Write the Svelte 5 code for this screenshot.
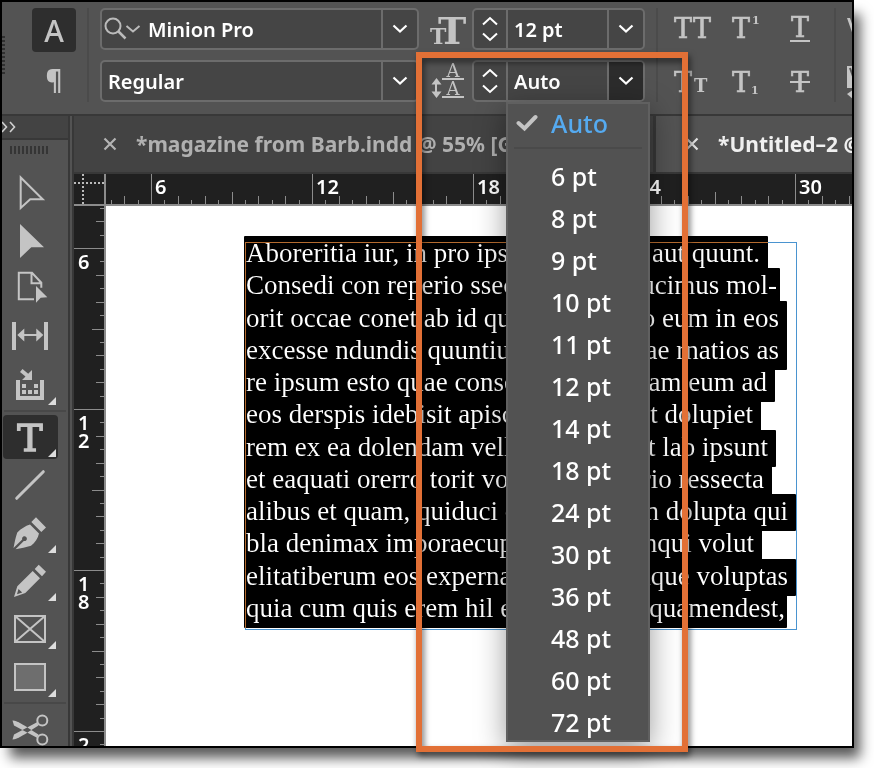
<script>
  const sizes = [6, 8, 9, 10, 11, 12, 14, 18, 24, 30, 36, 48, 60, 72];

  // Selected story text: the part before and after the open menu, plus the width of its highlight.
  const story = [
    { left: 'Aboreritia iur, in pro ips', right: 'aut quunt.', width: 524, end: 8 },
    { left: 'Consedi con reperio ssec', right: 'ucimus mol-', width: 536, end: 3 },
    { left: 'orit occae conet ab id qu', right: 'o eum in eos', width: 543, end: 8 },
    { left: 'excesse ndundis quuntiu', right: 'ae rnatios as', width: 543, end: 8 },
    { left: 're ipsum esto quae conse', right: 'am eum ad', width: 531, end: 8 },
    { left: 'eos derspis idebisit apisc', right: 't dolupiet', width: 517, end: 8 },
    { left: 'rem ex ea dolendam vell', right: 't lab ipsunt', width: 532, end: 8 },
    { left: 'et eaquati orerro torit vo', right: 'rio ressecta', width: 528, end: 8 },
    { left: 'alibus et quam, quiduci c', right: 'n dolupta qui', width: 552, end: 8 },
    { left: 'bla denimax imporaecup', right: 'nqui volut', width: 518, end: 8 },
    { left: 'elitatiberum eos experna', right: 'aque voluptas', width: 552, end: 8 },
    { left: 'quia cum quis erem hil e', right: 'quamendest,', width: 543, end: 2 }
  ];

  const step = 161 / 12;
  function makeTicks(origin, limit) {
    const ticks = [];
    for (let i = -6; origin + i * step < limit; i++) {
      const k = ((i % 12) + 12) % 12;
      ticks.push({ at: Math.round(origin + i * step) + 0.5, len: k === 0 ? 30 : k === 6 ? 12 : k % 2 === 0 ? 8 : 4 });
    }
    return ticks.filter((t) => t.at > 0);
  }
  const across = makeTicks(45, 2400);
  const down = makeTicks(42, 1600);
  const acrossLabels = [6, 12, 18, 24, 30].map((n, i) => ({ n, at: 49 + i * 161 }));
  const downLabels = ['6', '12', '18', '24'].map((n, i) => ({ n: n.split(''), at: 63 + i * 161 }));

  let leading = $state('Auto');
</script>

{#snippet chevron()}
  <svg width="16" height="10" viewBox="0 0 16 10"><path d="M1.5 1.5 8 7.5l6.5-6" fill="none" stroke="#fff" stroke-width="2.2" /></svg>
{/snippet}

{#snippet spinner(what)}
  <span class="spin">
    <button aria-label="Increase {what}"><svg width="16" height="10" viewBox="0 0 16 10"><path d="M1 8.5 8 2l7 6.500" fill="none" stroke="#fff" stroke-width="2" /></svg></button>
    <button aria-label="Decrease {what}"><svg width="16" height="10" viewBox="0 0 16 10"><path d="M1 1.500 8 8l7-6.500" fill="none" stroke="#fff" stroke-width="2" /></svg></button>
  </span>
{/snippet}

{#snippet corner()}
  <path d="M54 36v8h-8z" fill="#ddd" />
{/snippet}

<div class="window">
  <header class="toolbar">
    <div class="grip"></div>
    <div class="modes">
      <button class="mode on" aria-label="Character formatting">A</button>
      <button class="mode para" aria-label="Paragraph formatting">¶</button>
    </div>
    <div class="rule"></div>
    <div class="fields fonts">
      <div class="combo">
        <svg class="search" width="40" height="38" viewBox="0 0 40 38">
          <circle cx="11" cy="16" r="7.500" fill="none" stroke="#bbb" stroke-width="2" />
          <path d="m16.500 21.500 7 7" stroke="#bbb" stroke-width="2.500" />
          <path d="m24.500 16 6.500 5.500 6.500-5.500" fill="none" stroke="#bbb" stroke-width="2" />
        </svg>
        <input aria-label="Font family" value="Minion Pro" />
        <button class="drop" aria-label="Font family list">{@render chevron()}</button>
      </div>
      <div class="combo">
        <input aria-label="Font style" value="Regular" />
        <button class="drop" aria-label="Font style list">{@render chevron()}</button>
      </div>
    </div>
    <div class="fields metrics">
      <div class="metric">
        <svg width="38" height="42" viewBox="0 0 38 42">
          <g fill="#c4c4c4" font-family="DejaVu Serif, serif" font-weight="700">
            <text x="8" y="36" font-size="38">T</text>
            <text x="0" y="36" font-size="22" stroke="#535353" stroke-width="2" paint-order="stroke">T</text>
          </g>
        </svg>
        <div class="combo">
          {@render spinner('font size')}
          <input aria-label="Font size" value="12 pt" />
          <button class="drop" aria-label="Font size list">{@render chevron()}</button>
        </div>
      </div>
      <div class="metric">
        <svg width="38" height="42" viewBox="0 0 38 42">
          <g fill="#c4c4c4" font-weight="400">
            <path d="M6 22v12" stroke="#c4c4c4" stroke-width="2" />
            <path d="m6.500 18 5 6.500h-10zM6.500 38l5-6.500h-10z" />
            <path d="M12 18h22v2H12zM12 36h22v2H12z" />
            <text x="23" y="17" font-size="18" text-anchor="middle" font-family="DejaVu Serif, serif">A</text>
            <text x="23" y="35" font-size="18" text-anchor="middle" font-family="DejaVu Serif, serif">A</text>
          </g>
        </svg>
        <div class="combo">
          {@render spinner('leading')}
          <input aria-label="Leading" bind:value={leading} />
          <button class="drop open" aria-label="Leading list" aria-expanded="true">{@render chevron()}</button>
          <div class="menu" role="listbox" aria-label="Leading values">
            <button class="auto" role="option" aria-selected="true" onclick={() => (leading = 'Auto')}>
              <svg width="22" height="18" viewBox="0 0 22 18"><path d="m2.500 9 6 5.500L19.500 3" fill="none" stroke="#c4c4c4" stroke-width="4" stroke-linecap="round" /></svg>
              Auto
            </button>
            <hr />
            {#each sizes as size}
              <button role="option" aria-selected="false" onclick={() => (leading = `${size} pt`)}>{size} pt</button>
            {/each}
          </div>
        </div>
        <div class="callout"></div>
      </div>
    </div>
    <div class="rule"></div>
    <div class="styles">
      <button aria-label="All caps"><svg width="38" height="42"><text x="0" y="30">T</text><text x="19" y="30">T</text></svg></button>
      <button aria-label="Superscript"><svg width="38" height="42"><text x="0" y="30">T</text><text class="small" x="20" y="16">1</text></svg></button>
      <button aria-label="Underline"><svg width="20" height="42"><text x="1" y="29">T</text><path d="M0 32h20v2H0z" /></svg></button>
      <button aria-label="Small caps"><svg width="38" height="42"><text x="0" y="32">T</text><text class="cap" x="20" y="32">T</text></svg></button>
      <button aria-label="Subscript"><svg width="38" height="42"><text x="0" y="32">T</text><text class="small" x="19" y="34">1</text></svg></button>
      <button aria-label="Strikethrough"><svg width="20" height="42"><text x="1" y="32">T</text><path d="M0 21h20v2H0z" /></svg></button>
    </div>
    <div class="rule"></div>
    <div class="more">
      <svg width="24" height="42" viewBox="0 0 24 42"><path d="M0 10h3l5 15 5-15h3L9 30H7z" fill="#c4c4c4" /></svg>
      <svg width="24" height="42" viewBox="0 0 24 42"><path d="M0 6h16v22H0z" fill="#c4c4c4" /><path d="m3 8 5 14 5-14" fill="none" stroke="#535353" stroke-width="2" /><path d="m0 34 7-5v11z" fill="#c4c4c4" /></svg>
    </div>
  </header>

  <div class="body">
    <aside class="tools">
      <div class="tools-head">
        <svg width="16" height="12" viewBox="0 0 16 12"><path d="m0 1 4.500 5L0 11M8 1l4.500 5L8 11" fill="none" stroke="#d0d0d0" stroke-width="1.600" /></svg>
      </div>
      <div class="tools-grip"></div>
      <button aria-label="Selection tool"><svg viewBox="0 0 66 48"><path class="line" d="M18.700 8.500v30.500l9.500-8.700h12.500z" /></svg></button>
      <button aria-label="Direct selection tool"><svg viewBox="0 0 66 48"><path d="M18 7v34l11.300-10.700H42z" /></svg></button>
      <button aria-label="Page tool"><svg viewBox="0 0 66 48"><path class="line" d="M32 34.300H16.800V7.700H30l9.300 10v5M29.500 7.700v10.500h9.800" /><path d="M34 21v16.700l4.700-5 6.600-.4z" /></svg></button>
      <button aria-label="Gap tool"><svg viewBox="0 0 66 48"><path d="M10 9h4v28h-4zM42 9h4v28h-4zM15.300 22l7-6.500v5.500h12v-5.500l7 6.500-7 6.500v-5.500h-12v5.500z" /></svg></button>
      <button aria-label="Content collector tool"><svg viewBox="0 0 66 48"><path d="M14 19h4v16h20V19h4v20H14zM20 23h4v4h-4zM32 23h4v4h-4zM20 29h4v4h-4zM26 29h4v4h-4zM32 29h4v4h-4zM30 9v10H20l3.500-3.500-5.500-4.500 2.500-3 5.700 4.800z" />{@render corner()}</svg></button>
      <hr />
      <button aria-label="Type tool"><svg viewBox="0 0 66 48"><rect x="1" y="2" width="55" height="44" rx="4" fill="#2e2e2e" /><text x="28" y="38" font-size="38" font-weight="400" text-anchor="middle" font-family="DejaVu Serif, serif" stroke="#c4c4c4" stroke-width="1.400">T</text>{@render corner()}</svg></button>
      <button aria-label="Line tool"><svg viewBox="0 0 66 48"><path d="M14.700 37.300 41.300 10.700" stroke="#c4c4c4" stroke-width="3" stroke-linecap="round" /></svg></button>
      <button aria-label="Pen tool"><svg viewBox="0 0 66 48"><path d="M34 8.300 44 18.500l-4.700 4.500-10-10zM28 15.500l9 9c-1 5-4 9-8 12.200-5 1.600-10 2.300-15.500 3.600l8.300-8.300a2.400 2.400 0 1 0-1.600-1.600L11.500 39c1.200-5.500 1.800-10 3.800-15.500 3.700-3.800 8-6.500 12.700-8z" />{@render corner()}</svg></button>
      <button aria-label="Pencil tool"><svg viewBox="0 0 66 48"><path fill-rule="evenodd" d="m36.700 7.700 7.300 7-4 4.600-7.300-7.300zM30.700 14l7.300 7.300L23.300 36 12 40l3.300-10.700zM16.500 32l-1.500 5.300 5.200-1.700z" />{@render corner()}</svg></button>
      <button aria-label="Rectangle frame tool"><svg viewBox="0 0 66 48"><path class="line" d="M13 11h30v26H13zl30 26M43 11 13 37" />{@render corner()}</svg></button>
      <button aria-label="Rectangle tool"><svg viewBox="0 0 66 48"><path class="line solid" d="M13 11h30v26H13z" />{@render corner()}</svg></button>
      <hr />
      <button aria-label="Scissors tool"><svg viewBox="0 0 66 48"><circle class="line" cx="40.300" cy="15.500" r="5" /><circle class="line" cx="40.300" cy="34.500" r="5" /><path d="M10.500 15.500c4 .3 6 1 26 14l-1.500 3.200L12 20.500zM10.500 34.500c4-.3 6-1 26-14l-1.500-3.200L12 29.500z" /></svg></button>
    </aside>

    <main class="docs">
      <nav class="tabs">
        <div class="tab first">
          <button aria-label="Close magazine from Barb"><svg width="14" height="14" viewBox="0 0 14 14"><path d="m1.500 1.500 11 11m0-11-11 11" stroke="#b4b4b4" stroke-width="2.200" /></svg></button>
          <span>*magazine from Barb.indd @ 55% [G</span>
        </div>
        <div class="tab active">
          <button aria-label="Close Untitled-2"><svg width="14" height="14" viewBox="0 0 14 14"><path d="m1.500 1.500 11 11m0-11-11 11" stroke="#e4e4e4" stroke-width="2.200" /></svg></button>
          <span>*Untitled–2 @</span>
        </div>
      </nav>
      <div class="row ruler-row">
        <div class="origin"><svg width="30" height="30"><path d="M9 0v30M0 9h30" stroke="#bbb" stroke-width="2" stroke-dasharray="2 2" /></svg></div>
        <div class="ruler-x">
          <svg width="100%" height="30">
            {#each across as t}<path d="M{t.at} 30v-{t.len}" stroke="#8c8c8c" />{/each}
            {#each acrossLabels as l}<text x={l.at} y="20">{l.n}</text>{/each}
          </svg>
        </div>
      </div>
      <div class="row page-row">
        <div class="ruler-y">
          <svg width="30" height="100%">
            {#each down as t}<path d="M30 {t.at}h-{t.len}" stroke="#8c8c8c" />{/each}
            {#each downLabels as l}
              {#each l.n as d, i}<text x="4" y={l.at + i * 18}>{d}</text>{/each}
            {/each}
          </svg>
        </div>
        <div class="canvas">
          <div class="frame">
            <div class="selection">
              {#each story as s}
                <div class="line-box" style="width: {s.width}px; padding-right: {s.end}px"><span>{s.left}</span><span>{s.right}</span></div>
              {/each}
            </div>
          </div>
        </div>
      </div>
    </main>
  </div>
</div>

<style>
  :global(body) { margin: 0; background: #fff; overflow: hidden; }
  * { box-sizing: border-box; }
  button { background: none; border: 0; padding: 0; margin: 0; color: inherit; font: inherit; display: flex; align-items: center; justify-content: center; }
  svg { display: block; flex: none; }

  .window {
    margin: 0 20px 20px 0;
    height: calc(100vh - 20px);
    border: 2px solid #000;
    background: #535353;
    display: flex;
    flex-direction: column;
    font-family: "Noto Sans", "Open Sans", sans-serif;
    font-size: 20px;
    font-weight: 600;
    color: #fff;
    box-shadow: 8px 12px 12px -2px rgba(0, 0, 0, 0.65);
  }

  .toolbar { position: relative; z-index: 2; flex: none; height: 112px; padding-top: 6px; display: flex; align-items: flex-start; overflow-x: clip; }
  .grip { flex: none; width: 3px; height: 38px; margin-top: 28px; background: repeating-linear-gradient(#303030 0 2px, #535353 2px 4px); }
  .modes { flex: none; width: 44px; margin-left: 27px; display: flex; flex-direction: column; gap: 6px; }
  .mode { height: 44px; border-radius: 4px; color: #c4c4c4; font: 500 30px "Noto Sans", sans-serif; }
  .mode.on { background: #2e2e2e; }
  .mode.para { font: 700 26px "Noto Sans", sans-serif; }
  .rule { flex: none; width: 2px; height: 94px; margin: 0 11px; background: #4b4b4b; }
  .fields { display: flex; flex-direction: column; gap: 10px; }
  .fonts { flex: 1 1 319px; min-width: 0; }
  .metrics { flex: none; margin-left: 11px; }
  .metric { position: relative; display: flex; gap: 4px; }
  .metric .combo { width: 173px; }
  .combo { position: relative; height: 42px; display: flex; border: 2px solid #6c6c6c; border-radius: 5px; background: #454545; }
  .combo input { flex: 1; min-width: 0; width: 0; border: 0; outline: 0; background: none; padding: 0 6px; color: #fff; font: inherit; }
  .drop { flex: none; width: 36px; border-left: 2px solid #6c6c6c; }
  .drop.open { background: #2c2c2c; border-radius: 0 3px 3px 0; }
  .spin { flex: none; width: 34px; border-right: 2px solid #6c6c6c; display: flex; flex-direction: column; justify-content: space-around; padding: 3px 0; }

  .menu { position: absolute; z-index: 1; left: 32px; top: 40px; width: 144px; height: 640px; display: flex; flex-direction: column; gap: 4px; background: #525252; border: 2px solid #606060; box-shadow: 0 8px 28px rgba(0, 0, 0, 0.4); font-size: 25px; font-weight: 500; }
  .menu button { height: 38px; flex: none; justify-content: flex-start; padding-left: 43px; }
  .menu .auto { color: #55aaf0; padding-left: 8px; gap: 13px; }
  .menu hr { flex: none; width: 128px; height: 2px; margin: 1px auto 4px; border: 0; background: #4a4a4a; }
  .callout { position: absolute; z-index: 2; left: -14px; top: -8px; width: 272px; height: 700px; border: 6px solid #e27036; filter: drop-shadow(2px 4px 3px rgba(0, 0, 0, 0.55)); pointer-events: none; }

  .styles { flex: none; display: grid; grid-template-columns: 58px 58px 28px; row-gap: 10px; width: 154px; padding-left: 5px; }
  .styles button { justify-content: flex-start; }
  .styles svg { fill: #c4c4c4; stroke: #c4c4c4; stroke-width: 0.600px; font: 400 27px "DejaVu Serif", serif; overflow: visible; }
  .styles path { stroke: none; }
  .styles .small { font: 700 11px "DejaVu Serif", serif; stroke: none; }
  .styles .cap { font: 700 18px "DejaVu Serif", serif; stroke: none; }
  .more { flex: none; display: flex; flex-direction: column; gap: 10px; margin-right: -19px; }

  .body { flex: 1; min-height: 0; display: flex; border-top: 2px solid #383838; overflow: hidden; }
  .tools { flex: none; width: 68px; border-right: 2px solid #383838; overflow: hidden; }
  .tools-head { height: 24px; display: flex; align-items: center; background: #434343; border-bottom: 2px solid #383838; }
  .tools-grip { width: 38px; height: 8px; margin: 6px 0 15px 8px; background: repeating-linear-gradient(90deg, #353535 0 2px, #535353 2px 4px); }
  .tools button svg { width: 66px; height: 48px; fill: #c4c4c4; }
  .tools .line { fill: none; stroke: #c4c4c4; stroke-width: 2; }
  .tools .solid { fill: #6e6e6e; }
  .tools hr { height: 2px; margin: 1px 2px; border: 0; background: #484848; }

  .docs { flex: 1; min-width: 0; margin-left: 2px; border-left: 2px solid #383838; display: flex; flex-direction: column; }
  .tabs { flex: none; height: 58px; display: flex; background: #434343; border-bottom: 2px solid #383838; font-size: 21px; font-weight: 700; color: #b0b0b0; white-space: nowrap; overflow: hidden; }
  .tab { display: flex; align-items: center; gap: 19px; padding-left: 29px; overflow: hidden; }
  .first { flex: none; width: 582px; border-right: 3px solid #383838; }
  .active { flex: 1; background: #535353; color: #f0f0f0; }
  .row { display: flex; }
  .ruler-row { flex: none; height: 32px; border-bottom: 2px solid #8c8c8c; background: #202020; }
  .origin, .ruler-y { flex: none; width: 32px; border-right: 2px solid #8c8c8c; background: #202020; overflow: hidden; }
  .ruler-x { flex: 1; min-width: 0; overflow: hidden; }
  .ruler-x text, .ruler-y text { font: 600 20px "Noto Sans", sans-serif; fill: #fff; }
  .page-row { flex: 1; min-height: 0; }
  .canvas { position: relative; flex: 1; min-width: 0; background: #fff; overflow: hidden; }

  .frame { position: absolute; left: 139px; top: 36px; width: 552px; height: 388px; border: 1px solid #4a94d0; }
  /* Selection is drawn as an inversion of whatever lies below it. */
  .selection { position: absolute; left: -2px; top: -7px; height: 387px; display: grid; grid-template-rows: repeat(12, minmax(0, 1fr)); mix-blend-mode: difference; color: #000; font: 400 27px "Liberation Serif", serif; }
  .line-box { height: 37px; line-height: 34px; padding-left: 2px; display: flex; justify-content: space-between; background: #fff; white-space: nowrap; border-radius: 1px; }
</style>
